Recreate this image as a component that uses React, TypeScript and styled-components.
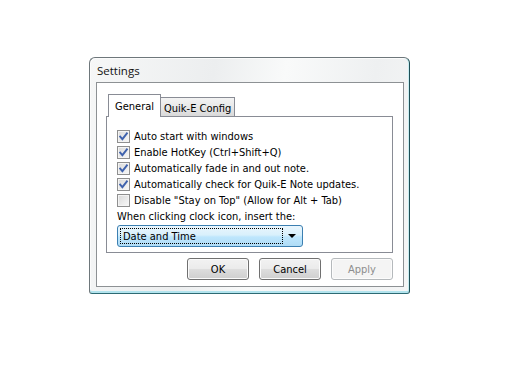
import React from 'react';
import styled, { createGlobalStyle } from 'styled-components';

const options = [
  { label: 'Auto start with windows', checked: true },
  { label: 'Enable HotKey (Ctrl+Shift+Q)', checked: true },
  { label: 'Automatically fade in and out note.', checked: true },
  { label: 'Automatically check for Quik-E Note updates.', checked: true },
  { label: 'Disable "Stay on Top" (Allow for Alt + Tab)', checked: false },
];

const CheckBox: React.FC<{ checked: boolean }> = ({ checked }) => (
  <Box>
    {checked && (
      <svg width="11" height="11" viewBox="0 0 11 11">
        <path
          d="M2.2 5.6 L4.4 8.2 L8.9 2.4"
          fill="none"
          stroke="#3f62ad"
          strokeWidth="1.9"
          strokeLinecap="square"
        />
      </svg>
    )}
  </Box>
);

const App: React.FC = () => {
  return (
    <>
      <GlobalStyle />
      <Page>
        <Window>
          <TitleBar>Settings</TitleBar>
          <Client>
            <TabRow>
              <Tab active>General</Tab>
              <Tab>Quik-E Config</Tab>
            </TabRow>

            <TabPanel>
              {options.map((o) => (
                <CheckRow key={o.label}>
                  <CheckBox checked={o.checked} />
                  <span>{o.label}</span>
                </CheckRow>
              ))}
              <Caption>When clicking clock icon, insert the:</Caption>
              <Combo>
                <ComboText>Date and Time</ComboText>
                <Arrow />
              </Combo>
            </TabPanel>

            <ButtonRow>
              <Button>OK</Button>
              <Button>Cancel</Button>
              <Button disabled>Apply</Button>
            </ButtonRow>
          </Client>
        </Window>
      </Page>
    </>
  );
};

export default App;

// Styles
const GlobalStyle = createGlobalStyle`
  html, body {
    margin: 0;
    background: #fff;
  }
  body {
    font-family: "DejaVu Sans Condensed", "DejaVu Sans", sans-serif;
    font-size: 11px;
    color: #000;
  }
`;

const Page = styled.div`
  width: 512px;
  height: 382px;
  box-sizing: border-box;
  padding: 57px 0 0 89px;
`;

const Window = styled.div`
  width: 321px;
  height: 237px;
  box-sizing: border-box;
  display: flex;
  flex-direction: column;
  border: 1px solid #6e777b;
  border-right-color: #1f4f55;
  border-bottom-color: #2d6a73;
  border-radius: 6px 6px 3px 3px;
  background: linear-gradient(
    100deg,
    #f6f7f7 0%,
    #eceeef 35%,
    #f9fafa 55%,
    #eef0f1 80%,
    #f5f6f6 100%
  );
  box-shadow: inset 0 -2px 0 #b3e4ee, inset -1px 0 0 #c9edf2,
    inset 1px 1px 0 #fbfbfb;
`;

const TitleBar = styled.div`
  height: 24px;
  display: flex;
  align-items: center;
  padding-left: 7px;
  font-family: "Open Sans", "Noto Sans", sans-serif;
  font-size: 11.5px;
  color: #111;
`;

const Client = styled.div`
  flex: 1;
  display: flex;
  flex-direction: column;
  margin: 0 5px 6px 6px;
  padding: 11px 10px 6px 9px;
  border: 1px solid #8d9194;
  background: #fff;
`;

const TabRow = styled.div`
  height: 22px;
  display: flex;
  align-items: flex-end;
  padding-left: 2px;
`;

const Tab = styled.div<{ active?: boolean }>`
  position: relative;
  box-sizing: border-box;
  display: flex;
  align-items: center;
  padding: ${(p) => (p.active ? '0 6px' : '2px 3px 0')};
  border: 1px solid #898c95;
  border-bottom: none;
  height: ${(p) => (p.active ? '23px' : '19px')};
  margin-bottom: ${(p) => (p.active ? '-1px' : '0')};
  margin-left: ${(p) => (p.active ? '0' : '-1px')};
  z-index: ${(p) => (p.active ? 2 : 1)};
  background: ${(p) =>
    p.active ? '#fff' : 'linear-gradient(#f3f3f3, #e8e8e8 50%, #d9d9d9)'};
`;

const TabPanel = styled.div`
  height: 137px;
  box-sizing: border-box;
  display: flex;
  flex-direction: column;
  padding: 11px 10px 0 10px;
  border: 1px solid #898c95;
  background: #fff;
`;

const CheckRow = styled.div`
  height: 16px;
  display: flex;
  align-items: center;
  gap: 4px;
`;

const Box = styled.div`
  width: 13px;
  height: 13px;
  box-sizing: border-box;
  display: flex;
  align-items: center;
  justify-content: center;
  border: 1px solid #8f8f8f;
  background: linear-gradient(135deg, #d8d8d8, #ececec 60%, #f8f8f8);
  box-shadow: inset 0 0 0 1px #f4f4f4;
`;

const Caption = styled.div`
  height: 16px;
  display: flex;
  align-items: center;
`;

const Combo = styled.div`
  margin-top: 1px;
  width: 186px;
  height: 22px;
  box-sizing: border-box;
  display: flex;
  align-items: center;
  padding: 2px 6px 2px 2px;
  border: 1px solid #3c7fb1;
  border-radius: 3px;
  background: linear-gradient(#eaf6fd 0%, #d9f0fc 45%, #bee6fd 55%, #afdcf6 100%);
`;

const ComboText = styled.div`
  flex: 1;
  height: 16px;
  box-sizing: border-box;
  display: flex;
  align-items: center;
  padding-left: 2px;
  margin-right: 5px;
  border: 1px dotted #000;
`;

const Arrow = styled.div`
  width: 0;
  height: 0;
  border-left: 4px solid transparent;
  border-right: 4px solid transparent;
  border-top: 4px solid #000;
`;

const ButtonRow = styled.div`
  margin-top: 5px;
  display: flex;
  justify-content: flex-end;
  gap: 10px;
`;

const Button = styled.button`
  width: 62px;
  height: 22px;
  padding: 0;
  font: inherit;
  color: #000;
  border: 1px solid #707070;
  border-radius: 3px;
  background: linear-gradient(#f2f2f2 0%, #ebebeb 48%, #dddddd 52%, #cfcfcf 100%);
  box-shadow: inset 0 0 0 1px #fbfbfb;

  &:disabled {
    color: #8d8d8d;
    border-color: #b5b9bc;
    background: #f4f4f4;
    box-shadow: inset 0 0 0 1px #fcfcfc;
  }
`;
